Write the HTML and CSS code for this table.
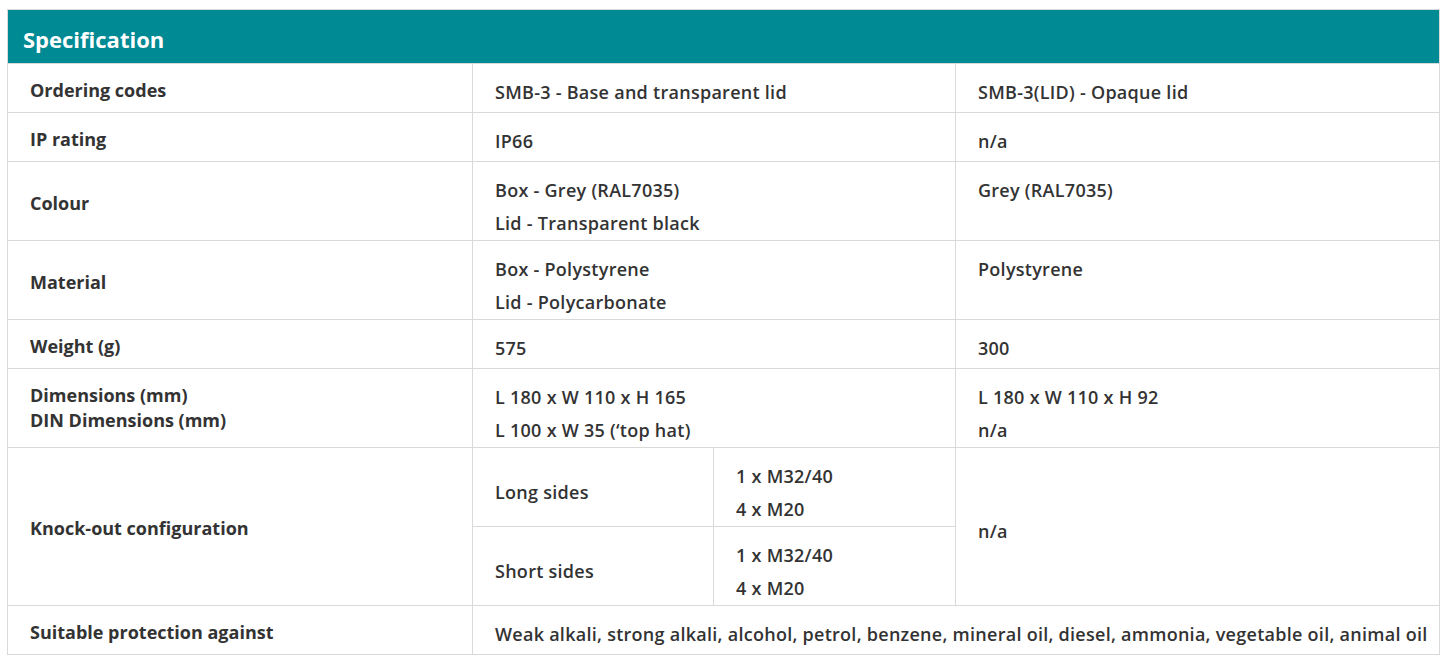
FILE: index.html
```html
<!DOCTYPE html>
<html lang="en">
<head>
<meta charset="utf-8">
<title>Specification</title>
<link rel="stylesheet" href="styles.css">
</head>
<body>
<div class="page">
<table class="spec">
  <colgroup>
    <col class="c1"><col class="c2a"><col class="c2b"><col class="c3">
  </colgroup>
  <thead>
    <tr><th colspan="4" class="title">Specification</th></tr>
  </thead>
  <tbody>
    <tr>
      <th class="label">Ordering codes</th>
      <td colspan="2">SMB-3 - Base and transparent lid</td>
      <td>SMB-3(LID) - Opaque lid</td>
    </tr>
    <tr>
      <th class="label">IP rating</th>
      <td colspan="2">IP66</td>
      <td>n/a</td>
    </tr>
    <tr>
      <th class="label">Colour</th>
      <td colspan="2">Box - Grey (RAL7035)<br>Lid - Transparent black</td>
      <td>Grey (RAL7035)</td>
    </tr>
    <tr>
      <th class="label">Material</th>
      <td colspan="2">Box - Polystyrene<br>Lid - Polycarbonate</td>
      <td>Polystyrene</td>
    </tr>
    <tr>
      <th class="label">Weight (g)</th>
      <td colspan="2">575</td>
      <td>300</td>
    </tr>
    <tr>
      <th class="label label-top">Dimensions (mm)<br>DIN Dimensions (mm)</th>
      <td colspan="2">L 180 x W 110 x H 165<br>L 100 x W 35 (‘top hat)</td>
      <td>L 180 x W 110 x H 92<br>n/a</td>
    </tr>
    <tr>
      <th class="label" rowspan="2">Knock-out configuration</th>
      <td class="mid">Long sides</td>
      <td>1 x M32/40<br>4 x M20</td>
      <td class="mid" rowspan="2">n/a</td>
    </tr>
    <tr>
      <td class="mid">Short sides</td>
      <td>1 x M32/40<br>4 x M20</td>
    </tr>
    <tr>
      <th class="label">Suitable protection against</th>
      <td colspan="3" class="wide">Weak alkali, strong alkali, alcohol, petrol, benzene, mineral oil, diesel, ammonia, vegetable oil, animal oil</td>
    </tr>
  </tbody>
</table>
</div>
</body>
</html>
```
FILE: styles.css
```css
html, body {
  margin: 0;
  padding: 0;
  background: #ffffff;
}
.page {
  padding: 9px 0 0 7px;
}
.spec {
  border-collapse: collapse;
  table-layout: fixed;
  width: 1432px;
  font-family: "Open Sans", "Noto Sans", sans-serif;
  color: #333333;
  font-size: 18px;
  letter-spacing: 0.27px;
}
.c1 { width: 465px; }
.c2a { width: 241px; }
.c2b { width: 242px; }
.c3 { width: 484px; }

.spec th, .spec td {
  border: 1px solid #d9d9d9;
  text-align: left;
  padding: 0 4px 0 22px;
}
.spec td {
  font-weight: 600;
  line-height: 33px;
  vertical-align: top;
  padding-top: 12px;
  padding-bottom: 0;
  height: 36px;
}
.spec th.label {
  font-weight: 700;
  letter-spacing: 0;
  line-height: 25px;
  vertical-align: middle;
  padding-top: 4px;
}
.spec th.label-top {
  vertical-align: top;
  padding-top: 14px;
}
.spec td.mid {
  vertical-align: middle;
  padding-top: 10px;
}
.spec td.wide {
  padding-top: 12px;
}
.spec th.title {
  background: #008a94;
  color: #ffffff;
  font-size: 22px;
  font-weight: 700;
  letter-spacing: 0;
  height: 48px;
  padding: 5px 0 0 15px;
  line-height: 48px;
  border-color: #d9d9d9;
}
```
